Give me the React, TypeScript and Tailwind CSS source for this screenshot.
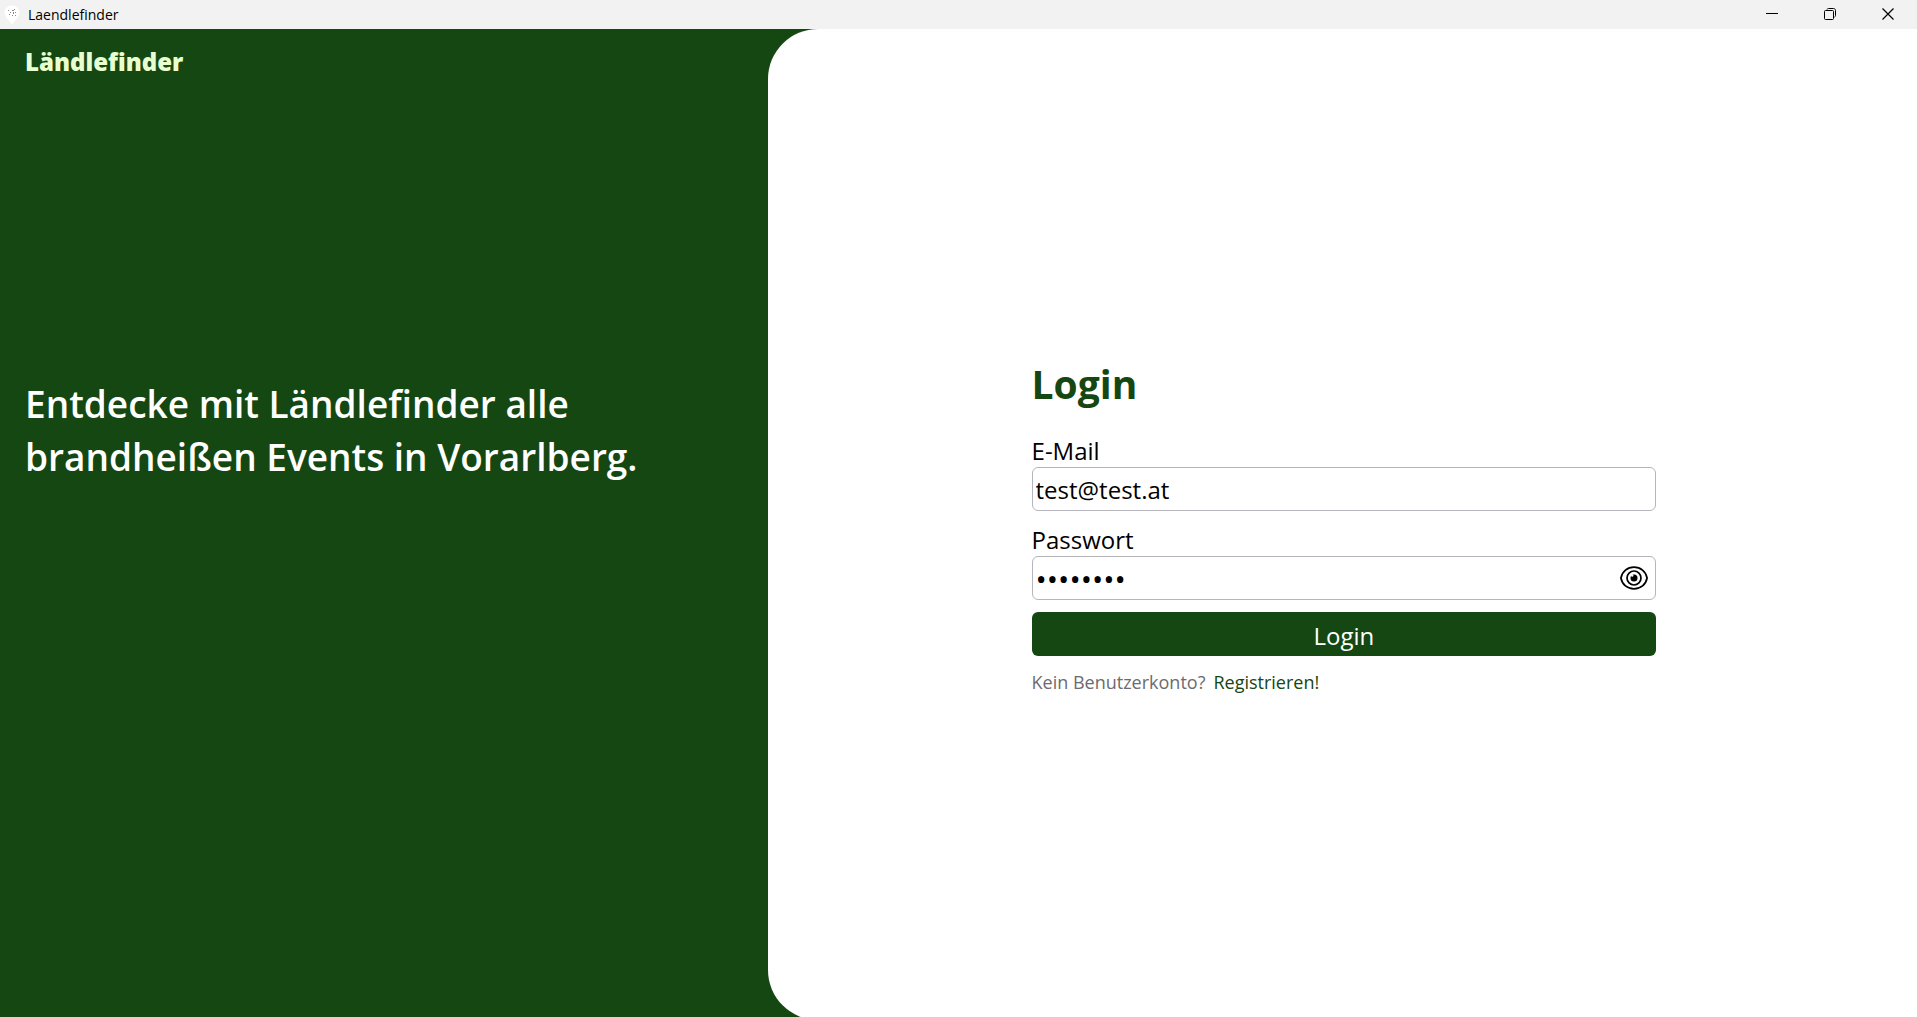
import { useState } from "react";
import type { ReactNode } from "react";

function PinIcon() {
  return (
    <svg viewBox="0 0 16 20" className="h-5 w-4" aria-hidden="true">
      <path d="M8 0.5C3.6 0.5 0.6 3.6 0.6 7.6C0.6 12.2 5 15.4 8 19.4C11 15.4 15.4 12.2 15.4 7.6C15.4 3.6 12.4 0.5 8 0.5Z" fill="#ffffff" />
      <g fill="#8a8a8a">
        <rect x="4" y="5" width="1" height="1" />
        <rect x="6" y="7" width="1" height="1" />
        <rect x="8" y="5" width="2" height="1" />
        <rect x="10" y="4" width="1" height="1" />
        <rect x="9" y="7" width="1" height="2" />
        <rect x="11" y="7" width="1" height="1" />
        <rect x="5" y="9" width="1" height="1" />
        <rect x="8" y="10" width="1" height="1" />
        <rect x="11" y="10" width="1" height="1" />
      </g>
    </svg>
  );
}

function EyeIcon() {
  return (
    <svg viewBox="0 0 28 24" className="h-6 w-7" fill="none" stroke="#000000" strokeWidth="1.7" aria-hidden="true">
      <path d="M0.9 12C2.2 5.4 7.4 1.2 14 1.2S25.8 5.4 27.1 12C25.8 18.6 20.6 22.8 14 22.8S2.2 18.6 0.9 12Z" />
      <circle cx="14" cy="12" r="7" />
      <circle cx="14" cy="12" r="3.5" fill="#000000" stroke="none" />
      <circle cx="12.2" cy="9.6" r="1.2" fill="#ffffff" stroke="none" />
    </svg>
  );
}

function WindowButton({ label, children }: { label: string; children: ReactNode }) {
  return (
    <button type="button" aria-label={label} className="flex h-full w-[58px] items-center justify-center text-black">
      <svg viewBox="0 0 12 12" className="h-3 w-3" fill="none" stroke="currentColor" aria-hidden="true">
        {children}
      </svg>
    </button>
  );
}

function TitleBar() {
  return (
    <header className="flex h-[29px] shrink-0 items-center justify-between bg-[#f2f2f2]">
      <div className="flex h-7 items-center gap-2 pl-1">
        <PinIcon />
        <span className="text-sm text-black">Laendlefinder</span>
      </div>
      <div className="flex h-7 self-start">
        <WindowButton label="Minimieren">
          <path d="M0 5.5H12" />
        </WindowButton>
        <WindowButton label="Verkleinern">
          <path d="M3 1.5C3.3 0.8 3.8 0.5 4.5 0.5H9.5C10.7 0.5 11.5 1.3 11.5 2.5V7.5C11.5 8.2 11.2 8.7 10.5 9" />
          <rect x="0.5" y="2.5" width="9" height="9" rx="1" />
        </WindowButton>
        <WindowButton label="Schließen">
          <path d="M0.5 0.5L11.5 11.5M11.5 0.5L0.5 11.5" strokeWidth="1.2" />
        </WindowButton>
      </div>
    </header>
  );
}

export default function App() {
  const [email, setEmail] = useState("test@test.at");
  const [password, setPassword] = useState("password");
  const [visible, setVisible] = useState(false);

  return (
    <div className="flex h-screen flex-col overflow-hidden bg-[#154712] font-['Open_Sans','Noto_Sans',sans-serif]">
      <TitleBar />
      <div className="grid min-h-0 flex-1 grid-cols-[2fr_3fr]">
        <section className="px-[25px] pt-[17px]">
          <p className="text-2xl leading-8 font-extrabold text-[#e8ffcf]">Ländlefinder</p>
          <h1 className="mt-[299px] text-[37px] leading-[53px] font-semibold text-white">
            Entdecke mit Ländlefinder alle
            <br />
            brandheißen Events in Vorarlberg.
          </h1>
        </section>
        <main className="-mb-[3px] ml-px flex flex-col items-center justify-center rounded-l-[50px] bg-white pt-1 pl-[3px]">
          <form className="w-[54.5%]" onSubmit={(e) => e.preventDefault()}>
            <h2 className="mb-6 text-[39px] leading-[53px] font-bold text-[#154712]">Login</h2>
            <label htmlFor="email" className="block text-2xl leading-[33px] text-black">
              E-Mail
            </label>
            <input
              id="email"
              type="email"
              value={email}
              onChange={(e) => setEmail(e.target.value)}
              className="mb-3 block h-11 w-full rounded-md border border-[#b5b5bb] bg-white px-[3px] text-2xl text-black outline-none"
            />
            <label htmlFor="password" className="block text-2xl leading-[33px] text-black">
              Passwort
            </label>
            <div className="mb-3 flex h-11 items-center rounded-md border border-[#b5b5bb] bg-white pr-[7px] pl-[3px]">
              <input
                id="password"
                type={visible ? "text" : "password"}
                value={password}
                onChange={(e) => setPassword(e.target.value)}
                className={
                  visible
                    ? "h-full min-w-0 flex-1 bg-transparent text-2xl text-black outline-none"
                    : "h-full min-w-0 flex-1 bg-transparent text-3xl text-black outline-none"
                }
              />
              <button type="button" aria-label="Passwort anzeigen" onClick={() => setVisible(!visible)}>
                <EyeIcon />
              </button>
            </div>
            <button type="submit" className="mb-3 block h-11 w-full rounded-md bg-[#154712] pt-[3px] text-2xl text-white">
              Login
            </button>
            <p className="flex gap-2 text-lg leading-7 text-[#6b6b70]">
              Kein Benutzerkonto?
              <a href="#registrieren" className="text-[#154712]">
                Registrieren!
              </a>
            </p>
          </form>
        </main>
      </div>
    </div>
  );
}
